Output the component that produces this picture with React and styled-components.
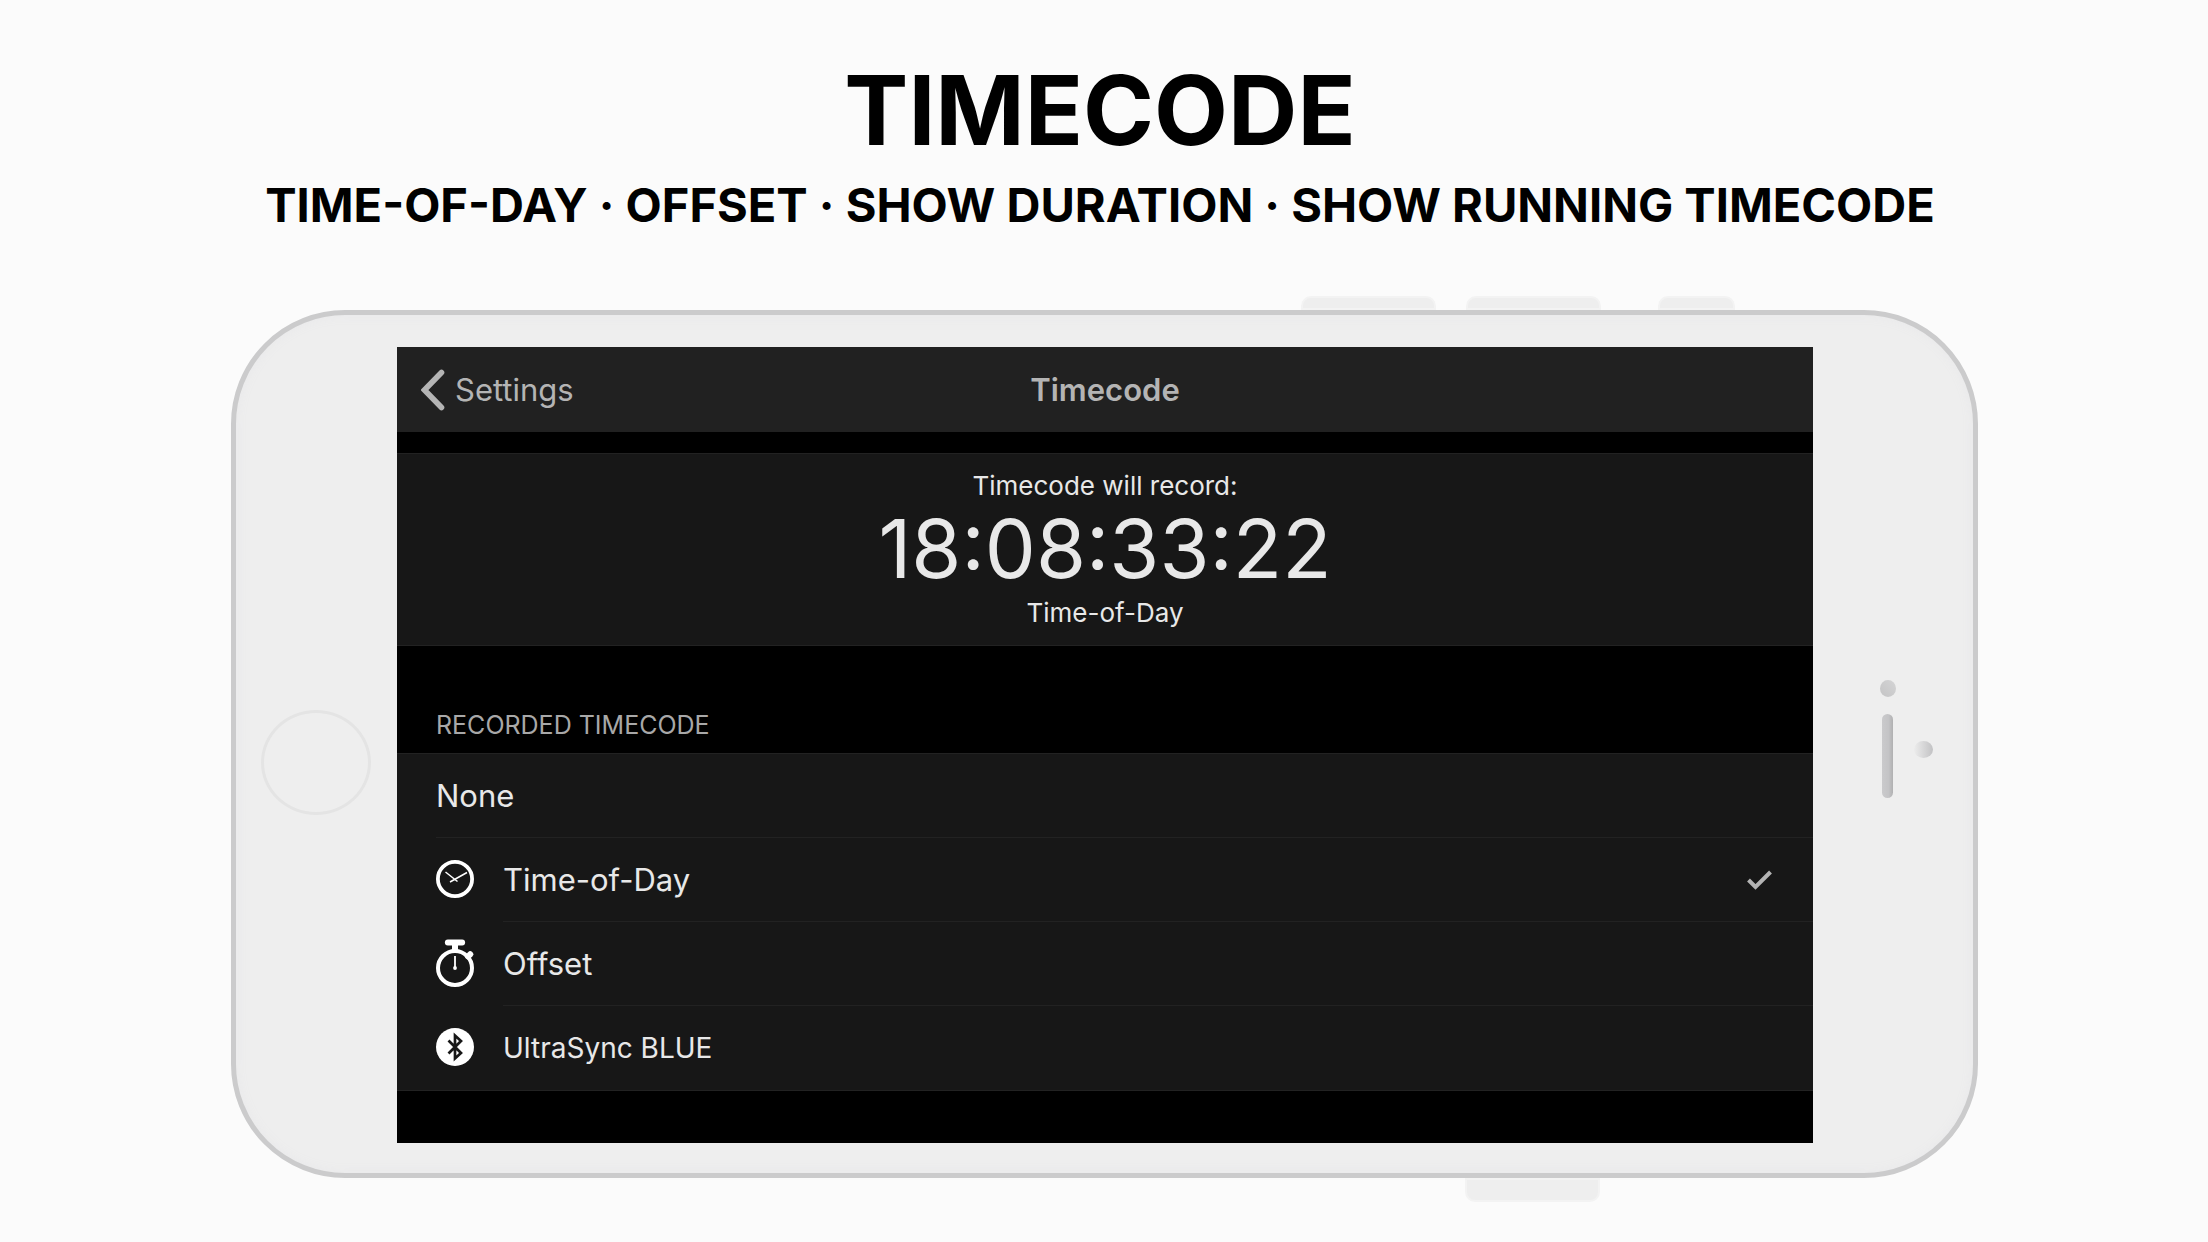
import React, { useState } from 'react'
import styled, { createGlobalStyle } from 'styled-components'

const options = [
    { id: 'none', label: 'None' },
    { id: 'tod', label: 'Time-of-Day', icon: ClockIcon },
    { id: 'offset', label: 'Offset', icon: StopwatchIcon },
    { id: 'ultrasync', label: 'UltraSync BLUE', icon: BluetoothIcon, small: true },
]

function ClockIcon () {
    return (
        <svg width="38" height="38" viewBox="0 0 38 38" fill="none" stroke="#fff">
            <circle cx="19" cy="19" r="17.1" strokeWidth="3.8" />
            <path d="M9.5 12 L21.5 21.5 M31 12.5 L14 22" strokeWidth="1.5" />
        </svg>
    )
}

function StopwatchIcon () {
    return (
        <svg width="38" height="48" viewBox="0 0 38 48" fill="none" stroke="#fff">
            <circle cx="19" cy="29" r="17" strokeWidth="4" />
            <path d="M11.8 3.5 H26.2" strokeWidth="5.8" strokeLinecap="round" />
            <path d="M19 4 V12" strokeWidth="6" />
            <path d="M32 17.5 L34.2 15.3" strokeWidth="6" strokeLinecap="round" />
            <path d="M19 17 V29" strokeWidth="1.8" />
            <circle cx="19" cy="29" r="1.9" fill="#fff" stroke="none" />
        </svg>
    )
}

function BluetoothIcon () {
    return (
        <svg width="38" height="38" viewBox="0 0 38 38" fill="none">
            <circle cx="19" cy="19" r="19" fill="#fff" />
            <path d="M12.5 12.5 L25 25 L19 30.5 V7.5 L25 13 L12.5 25.5" stroke="#171717" strokeWidth="2.7" />
        </svg>
    )
}

function Sensors () {
    return (
        <svg width="54" height="118" viewBox="0 0 54 118">
            <defs>
                <linearGradient id="lens" x1="0" y1="1" x2="1" y2="0">
                    <stop offset="0" stopColor="#c4c4c5" />
                    <stop offset="1" stopColor="#d4d4d5" />
                </linearGradient>
                <linearGradient id="speaker">
                    <stop offset="0" stopColor="#cacacc" />
                    <stop offset="0.6" stopColor="#c4c4c6" />
                    <stop offset="1" stopColor="#b0b0b1" />
                </linearGradient>
                <linearGradient id="proximity">
                    <stop offset="0" stopColor="#ececec" />
                    <stop offset="1" stopColor="#c2c2c4" />
                </linearGradient>
            </defs>
            <ellipse cx="8" cy="8.5" rx="8" ry="8.5" fill="url(#lens)" />
            <rect x="2" y="34" width="11" height="84" rx="5.5" fill="url(#speaker)" />
            <ellipse cx="43.5" cy="69.5" rx="9.5" ry="8.5" fill="url(#proximity)" />
        </svg>
    )
}

export default function App () {
    const [selected, setSelected] = useState('tod')

    return (
        <Page>
            <GlobalStyle />
            <Header>
                <Title>TIMECODE</Title>
                <Subtitle>TIME-OF-DAY · OFFSET · SHOW DURATION · SHOW RUNNING TIMECODE</Subtitle>
            </Header>

            <Phone>
                <TopKeys>
                    <Key />
                    <Key />
                    <Key $small />
                </TopKeys>
                <Body>
                    <HomeSide>
                        <HomeButton type="button" aria-label="Home" />
                    </HomeSide>
                    <Screen>
                        <NavBar>
                            <Back href="#settings">
                                <svg width="24" height="42" viewBox="0 0 24 42" fill="none" stroke="currentColor" strokeWidth="5.6">
                                    <path d="M20.5 3.5 L3.5 21 L20.5 38.5" strokeLinecap="round" />
                                </svg>
                                Settings
                            </Back>
                            <NavTitle>Timecode</NavTitle>
                        </NavBar>

                        <Preview>
                            <Caption>Timecode will record:</Caption>
                            <Clock>18:08:33:22</Clock>
                            <Caption>Time-of-Day</Caption>
                        </Preview>

                        <SectionTitle id="recorded">RECORDED TIMECODE</SectionTitle>
                        <List role="radiogroup" aria-labelledby="recorded">
                            {options.map(({ id, label, icon: Icon, small }) => (
                                <Row key={id} htmlFor={id}>
                                    <Radio
                                        type="radio"
                                        name="timecode"
                                        id={id}
                                        checked={selected === id}
                                        onChange={() => setSelected(id)}
                                    />
                                    {Icon && <IconBox><Icon /></IconBox>}
                                    <RowContent>
                                        <RowLabel $small={small}>{label}</RowLabel>
                                        {selected === id && (
                                            <svg width="26" height="20" viewBox="0 0 26 20" fill="none" stroke="#b4b4b4" strokeWidth="4">
                                                <path d="M1.5 10 L8.5 17 L23.5 2" />
                                            </svg>
                                        )}
                                    </RowContent>
                                </Row>
                            ))}
                        </List>
                    </Screen>
                    <SensorSide>
                        <Sensors />
                    </SensorSide>
                </Body>
                <BottomKeys>
                    <Key $bottom />
                </BottomKeys>
            </Phone>
        </Page>
    )
}

const GlobalStyle = createGlobalStyle`
    * {
        box-sizing: border-box;
    }

    body {
        margin: 0;
        background: #fbfbfb;
        font-family: Inter, 'Liberation Sans', sans-serif;
    }
`

const Page = styled.main`
    min-height: 100vh;
    padding: 50px 0 36px;
`

const Header = styled.header`
    padding-right: 8px;
    text-align: center;
    color: #000;
`

const Title = styled.h1`
    margin: 0;
    font-size: 96px;
    line-height: 120px;
    font-weight: 700;
`

const Subtitle = styled.h2`
    margin: 0;
    font-size: 47px;
    line-height: 70px;
    font-weight: 700;
    white-space: nowrap;
`

const Phone = styled.section`
    margin: 56px 230px 0 231px;
`

const TopKeys = styled.div`
    display: flex;
    justify-content: flex-end;
    gap: 30px;
    height: 14px;
    padding-right: 243px;
`

const BottomKeys = styled(TopKeys)`
    height: 24px;
    padding-right: 378px;
`

const Key = styled.span`
    width: ${({ $small }) => ($small ? 77 : 135)}px;
    margin-left: ${({ $small }) => ($small ? 27 : 0)}px;
    background: #eee;
    border: 2px solid #f3f3f3;
    border-radius: ${({ $bottom }) => ($bottom ? '0 0 10px 10px' : '10px 10px 0 0')};
`

const Body = styled.div`
    display: grid;
    grid-template-columns: 161px 1fr 160px;
    padding: 32px 0 30px;
    background: #eee;
    border: 5px solid #cbcbcc;
    border-radius: 114px;
    box-shadow: inset 0 0 12px #e8e8ea;
`

const HomeSide = styled.div`
    display: flex;
    align-items: center;
    padding: 34px 0 0 25px;
`

const HomeButton = styled.button`
    width: 110px;
    height: 105px;
    border: 3px solid #e4e4e4;
    border-radius: 50%;
    background: #eee;
`

const SensorSide = styled.div`
    display: flex;
    align-items: center;
    padding: 0 0 12px 67px;
`

const Screen = styled.div`
    padding-bottom: 52px;
    background: #000;
`

const NavBar = styled.nav`
    display: grid;
    grid-template-columns: 1fr auto 1fr;
    align-items: center;
    height: 85px;
    padding: 0 24px;
    background: #212121;
    color: #b4b4b4;
    font-size: 31px;
`

const Back = styled.a`
    display: flex;
    align-items: center;
    gap: 10px;
    color: inherit;
    text-decoration: none;
`

const NavTitle = styled.h3`
    margin: 0;
    font-size: 31px;
    font-weight: 600;
`

const Preview = styled.div`
    margin-top: 21px;
    padding: 12px 0;
    background: #171717;
    border: solid #222;
    border-width: 1px 0;
    color: #e8e8e8;
    text-align: center;
`

const Caption = styled.p`
    margin: 0;
    font-size: 26px;
    line-height: 40px;
`

const Clock = styled.p`
    margin: 0;
    font-size: 81px;
    line-height: 87px;
`

const SectionTitle = styled.h4`
    margin: 0;
    padding: 62px 39px 10px;
    color: #a8a8a8;
    font-size: 25px;
    font-weight: 400;
    line-height: 35px;
`

const List = styled.div`
    background: #171717;
    border: solid #222;
    border-width: 1px 0;
`

const Row = styled.label`
    display: flex;
    align-items: center;
    padding-left: 39px;
    cursor: pointer;
`

const Radio = styled.input`
    position: absolute;
    opacity: 0;
    pointer-events: none;
`

const IconBox = styled.span`
    display: flex;
    align-items: center;
    width: 67px;
    padding-bottom: 2px;
`

const RowContent = styled.span`
    display: flex;
    flex: 1;
    align-items: center;
    justify-content: space-between;
    height: 84px;
    padding-right: 40px;
    border-bottom: 1px solid #222;

    ${Row}:last-child & {
        border-bottom: 0;
    }
`

const RowLabel = styled.span`
    color: #e8e8e8;
    font-size: ${({ $small }) => ($small ? 28 : 31)}px;
`
